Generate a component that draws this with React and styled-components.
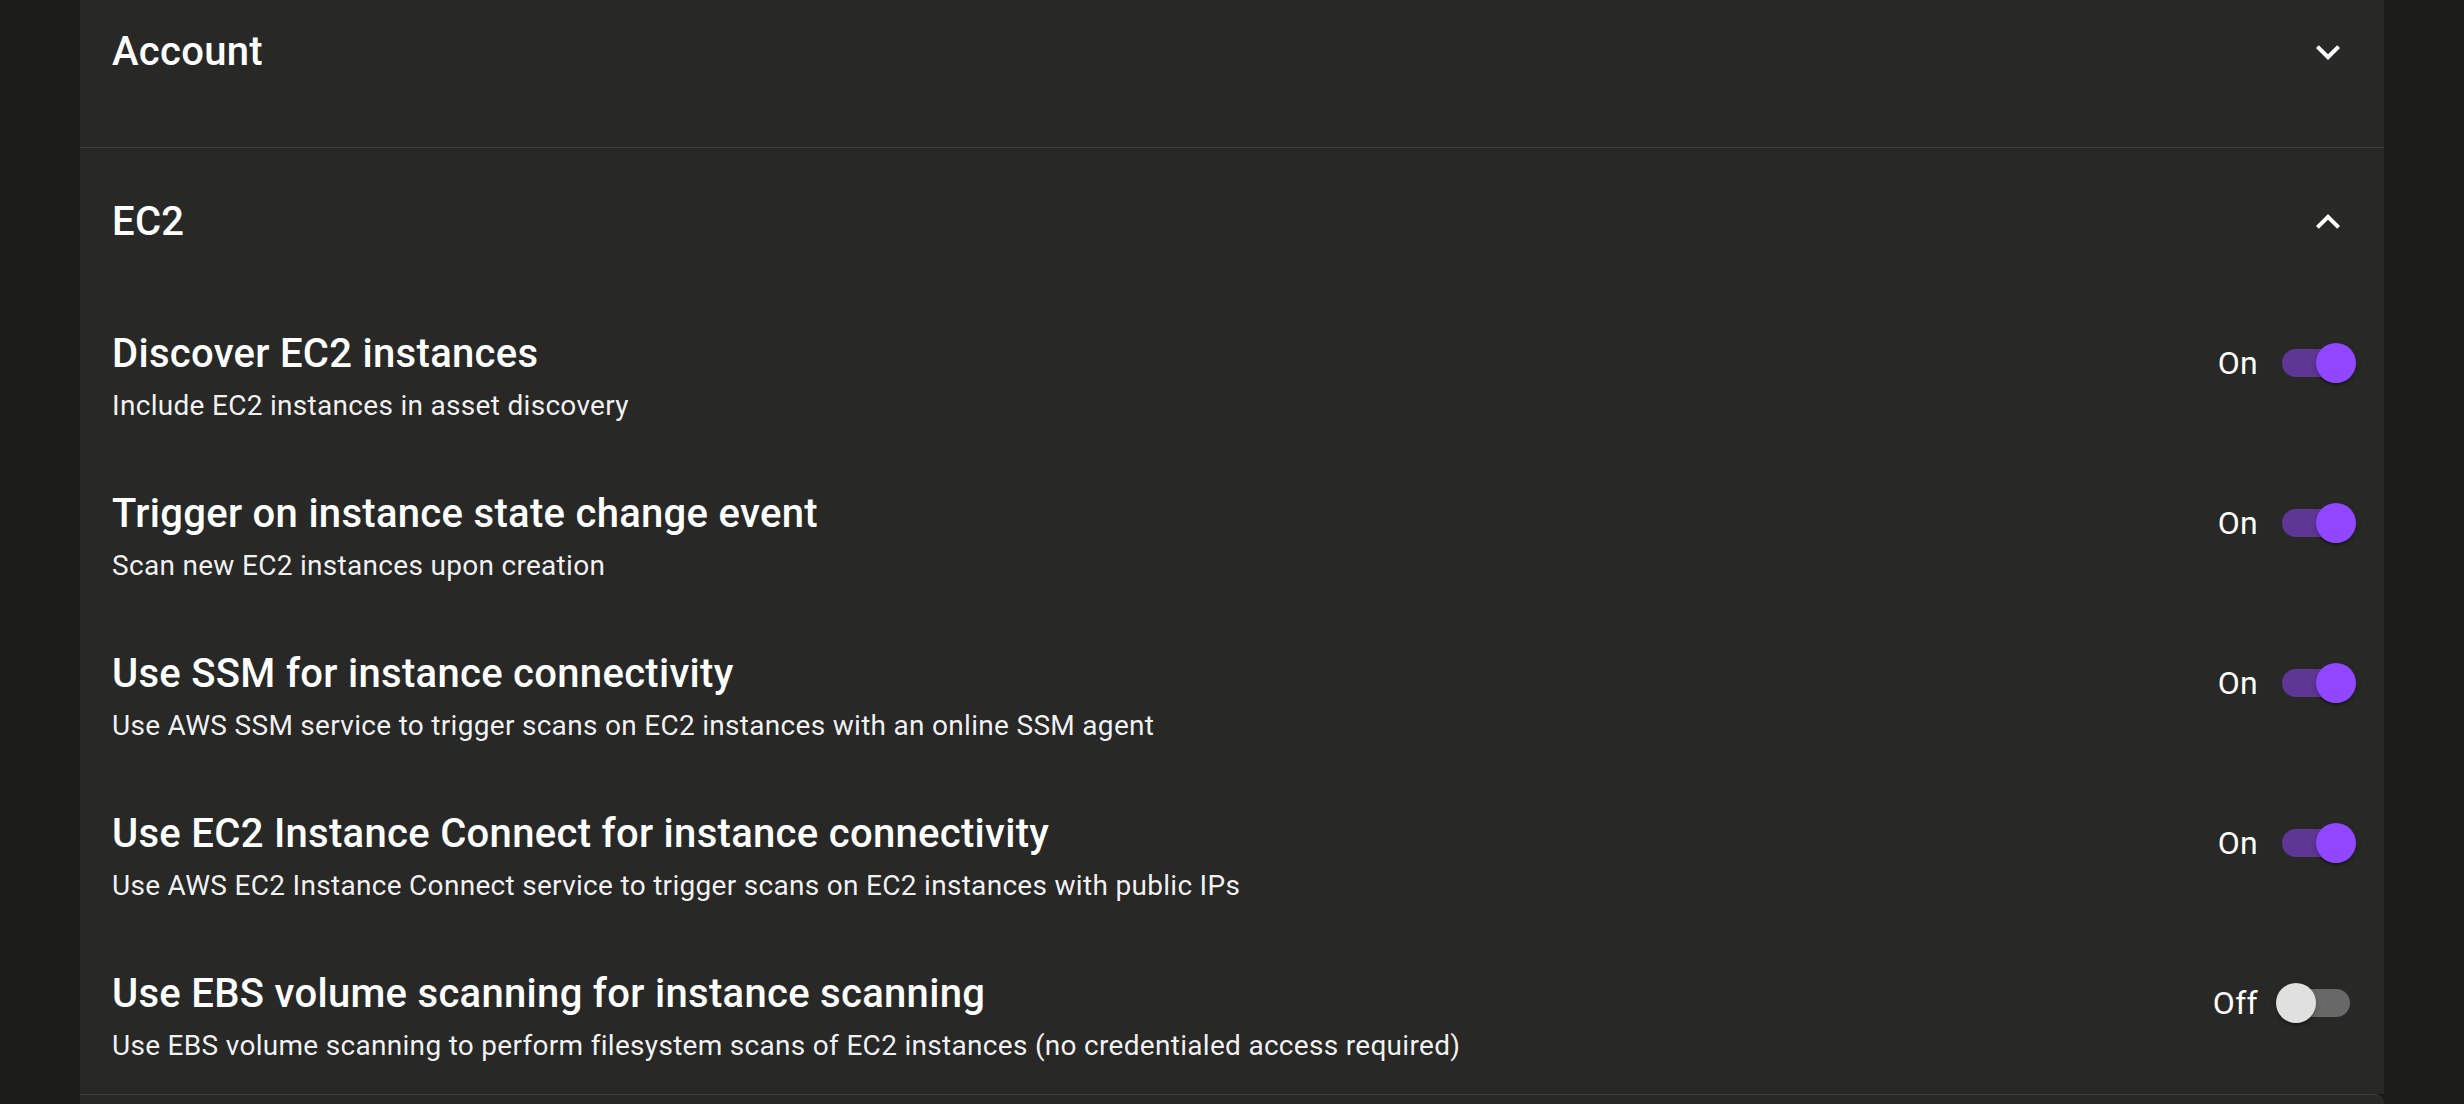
import React from 'react';
import styled, { createGlobalStyle } from 'styled-components';

const GlobalStyle = createGlobalStyle`
  html, body {
    margin: 0;
    padding: 0;
    background: #1c1c1b;
    font-family: Roboto, "Noto Sans", "Liberation Sans", sans-serif;
    color: #fff;
  }
`;

const Page = styled.div`
  min-height: 1104px;
  padding: 0 80px;
  background: #1c1c1b;
  overflow: hidden;
`;

const Panel = styled.div`
  background: #282827;
`;

const Section = styled.section`
  & + & {
    border-top: 1px solid #3d3d3c;
  }
`;

const Summary = styled.div`
  display: flex;
  justify-content: space-between;
  padding: ${p => p.$pad};
  min-height: ${p => p.$min || 0}px;
  box-sizing: border-box;
  align-items: ${p => (p.$top ? 'flex-start' : 'center')};
`;

const SectionTitle = styled.h2`
  margin: 0;
  font-size: 40px;
  font-weight: 500;
  line-height: 64px;
  letter-spacing: 0.0075em;
`;

const IconButton = styled.span`
  width: 48px;
  height: 64px;
  display: flex;
  align-items: center;
  justify-content: center;
  color: #fff;
`;

const Details = styled.div`
  display: flex;
  flex-direction: column;
  gap: 56px;
  padding: 30px 32px 28px;
`;

const Row = styled.div`
  display: flex;
  justify-content: space-between;
  align-items: flex-start;
`;

const RowText = styled.div`
  display: flex;
  flex-direction: column;
`;

const RowTitle = styled.div`
  font-size: 40px;
  font-weight: 500;
  line-height: 64px;
  letter-spacing: 0.0075em;
`;

const RowSub = styled.div`
  font-size: 28px;
  font-weight: 400;
  line-height: 40px;
  letter-spacing: 0.01071em;
  color: rgba(255, 255, 255, 0.95);
`;

const Control = styled.label`
  display: flex;
  align-items: center;
  margin: 3px -22px 0 32px;
`;

const ControlLabel = styled.span`
  font-size: 32px;
  line-height: 48px;
  letter-spacing: 0.00938em;
`;

const SwitchRoot = styled.span`
  position: relative;
  width: 116px;
  height: 76px;
  padding: 24px;
  box-sizing: border-box;
  flex-shrink: 0;
`;

const Track = styled.span`
  display: block;
  width: 68px;
  height: 28px;
  border-radius: 14px;
  background: ${p => (p.$on ? '#9146ff' : '#ffffff')};
  opacity: ${p => (p.$on ? 0.5 : 0.3)};
`;

const Thumb = styled.span`
  position: absolute;
  top: 18px;
  left: ${p => (p.$on ? 58 : 18)}px;
  width: 40px;
  height: 40px;
  border-radius: 50%;
  background: ${p => (p.$on ? '#9146ff' : '#e0e0e0')};
  box-shadow: 0 4px 2px -2px rgba(0, 0, 0, 0.2), 0 2px 2px 0 rgba(0, 0, 0, 0.14),
    0 2px 6px 0 rgba(0, 0, 0, 0.12);
`;

const NextPanel = styled.div`
  height: 12px;
  border-top: 1px solid #3d3d3c;
  border-radius: 0 10px 0 0;
  background: #282827;
`;

function Chevron({ up }) {
  return (
    <svg width="48" height="48" viewBox="0 0 24 24" fill="currentColor">
      {up ? (
        <path d="m12 8-6 6 1.41 1.41L12 10.83l4.59 4.58L18 14z" />
      ) : (
        <path d="M16.59 8.59 12 13.17 7.41 8.59 6 10l6 6 6-6z" />
      )}
    </svg>
  );
}

function Toggle({ on }) {
  return (
    <Control>
      <ControlLabel>{on ? 'On' : 'Off'}</ControlLabel>
      <SwitchRoot>
        <Track $on={on} />
        <Thumb $on={on} />
      </SwitchRoot>
    </Control>
  );
}

const settings = [
  {
    title: 'Discover EC2 instances',
    sub: 'Include EC2 instances in asset discovery',
    on: true,
  },
  {
    title: 'Trigger on instance state change event',
    sub: 'Scan new EC2 instances upon creation',
    on: true,
  },
  {
    title: 'Use SSM for instance connectivity',
    sub: 'Use AWS SSM service to trigger scans on EC2 instances with an online SSM agent',
    on: true,
  },
  {
    title: 'Use EC2 Instance Connect for instance connectivity',
    sub: 'Use AWS EC2 Instance Connect service to trigger scans on EC2 instances with public IPs',
    on: true,
  },
  {
    title: 'Use EBS volume scanning for instance scanning',
    sub: 'Use EBS volume scanning to perform filesystem scans of EC2 instances (no credentialed access required)',
    on: false,
  },
];

export default function App() {
  return (
    <>
      <GlobalStyle />
      <Page>
        <Panel>
          <Section>
            <Summary $pad="20px 32px 0" $min={147} $top>
              <SectionTitle>Account</SectionTitle>
              <IconButton>
                <Chevron />
              </IconButton>
            </Summary>
          </Section>
          <Section>
            <Summary $pad="42px 32px 38px">
              <SectionTitle>EC2</SectionTitle>
              <IconButton>
                <Chevron up />
              </IconButton>
            </Summary>
            <Details>
              {settings.map(s => (
                <Row key={s.title}>
                  <RowText>
                    <RowTitle>{s.title}</RowTitle>
                    <RowSub>{s.sub}</RowSub>
                  </RowText>
                  <Toggle on={s.on} />
                </Row>
              ))}
            </Details>
          </Section>
        </Panel>
        <NextPanel />
      </Page>
    </>
  );
}
